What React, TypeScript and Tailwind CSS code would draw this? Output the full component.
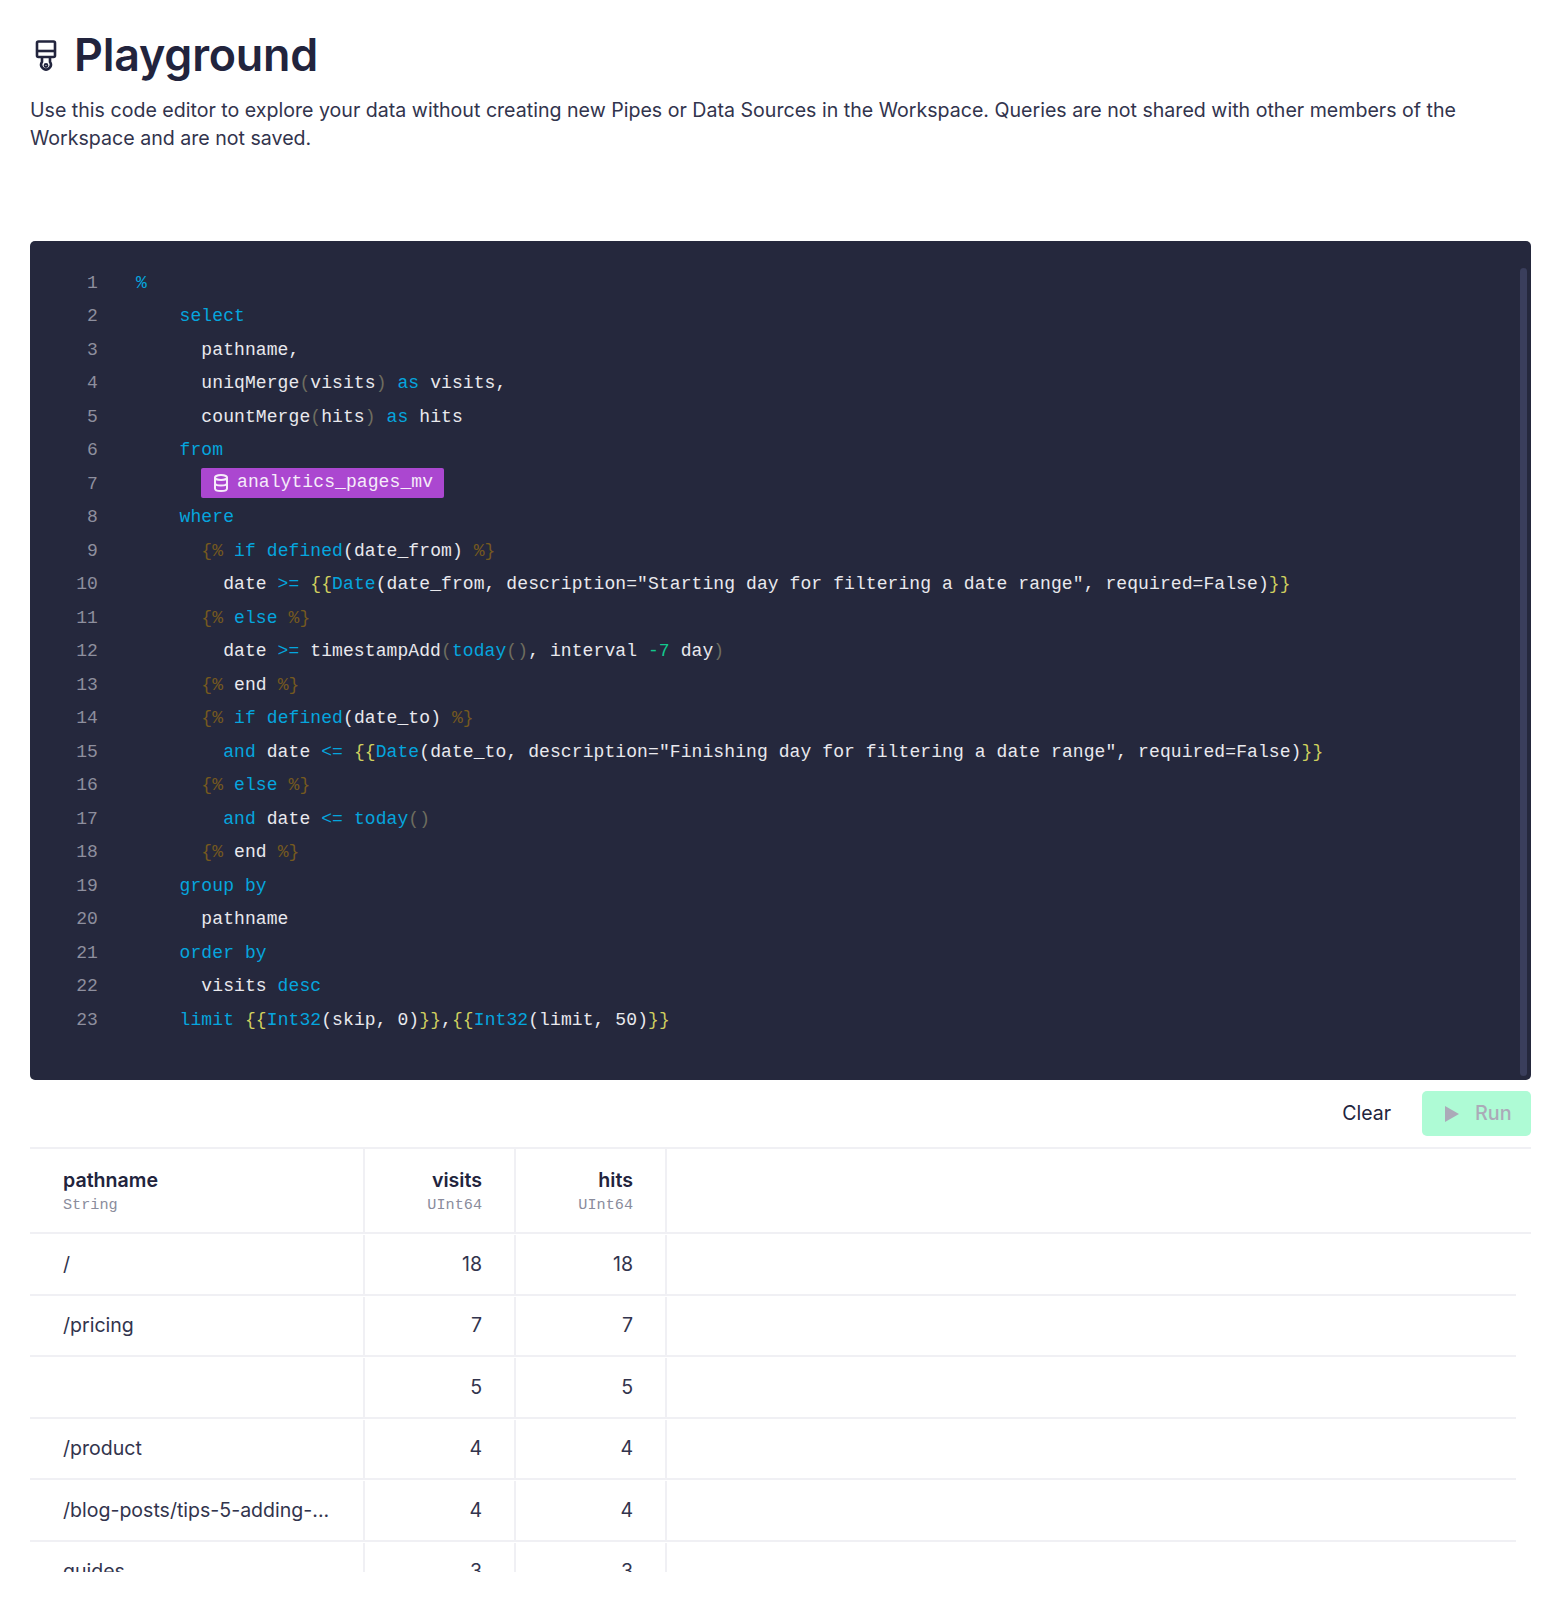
type Seg = [string, string?]

const kw = 'text-[#05a5de]'
const br = 'text-[#75591f]'
const yl = 'text-[#cfcf5e]'
const pn = 'text-[#6e6d5f]'
const gn = 'text-[#12c98d]'

const lines: Seg[][] = [
  [['%', kw]],
  [['    '], ['select', kw]],
  [['      pathname,']],
  [['      uniqMerge'], ['(', pn], ['visits'], [')', pn], [' '], ['as', kw], [' visits,']],
  [['      countMerge'], ['(', pn], ['hits'], [')', pn], [' '], ['as', kw], [' hits']],
  [['    '], ['from', kw]],
  [['TAG']],
  [['    '], ['where', kw]],
  [['      '], ['{%', br], [' '], ['if', kw], [' '], ['defined', kw], ['(date_from) '], ['%}', br]],
  [['        date '], ['>=', kw], [' '], ['{{', yl], ['Date', kw], ['(date_from, description="Starting day for filtering a date range", required=False)'], ['}}', yl]],
  [['      '], ['{%', br], [' '], ['else', kw], [' '], ['%}', br]],
  [['        date '], ['>=', kw], [' timestampAdd'], ['(', pn], ['today', kw], ['()', pn], [', interval '], ['-7', gn], [' day'], [')', pn]],
  [['      '], ['{%', br], [' end '], ['%}', br]],
  [['      '], ['{%', br], [' '], ['if', kw], [' '], ['defined', kw], ['(date_to) '], ['%}', br]],
  [['        '], ['and', kw], [' date '], ['<=', kw], [' '], ['{{', yl], ['Date', kw], ['(date_to, description="Finishing day for filtering a date range", required=False)'], ['}}', yl]],
  [['      '], ['{%', br], [' '], ['else', kw], [' '], ['%}', br]],
  [['        '], ['and', kw], [' date '], ['<=', kw], [' '], ['today', kw], ['()', pn]],
  [['      '], ['{%', br], [' end '], ['%}', br]],
  [['    '], ['group by', kw]],
  [['      pathname']],
  [['    '], ['order by', kw]],
  [['      visits '], ['desc', kw]],
  [['    '], ['limit', kw], [' '], ['{{', yl], ['Int32', kw], ['(skip, 0)'], ['}}', yl], [','], ['{{', yl], ['Int32', kw], ['(limit, 50)'], ['}}', yl]],
]

const rows = [
  ['/', '18', '18'],
  ['/pricing', '7', '7'],
  ['', '5', '5'],
  ['/product', '4', '4'],
  ['/blog-posts/tips-5-adding-...', '4', '4'],
  ['guides', '3', '3'],
]

function BrushIcon() {
  return (
    <svg width="22" height="32" viewBox="0 0 22 32" fill="none" stroke="#22243d" strokeWidth="2.6" strokeLinejoin="round">
      <rect x="2" y="2.5" width="18" height="15.5" rx="1.5" />
      <path d="M2 12h18" />
      <path d="M7 18v5a4.8 4.8 0 1 0 8 0V18" />
      <circle cx="11" cy="26.5" r="1.5" strokeWidth="1.8" />
    </svg>
  )
}

function TableIcon() {
  return (
    <svg width="16" height="18" viewBox="0 0 16 18" fill="none" stroke="currentColor" strokeWidth="2">
      <ellipse cx="8" cy="3.5" rx="6" ry="2.5" />
      <path d="M2 3.5v11c0 1.4 2.7 2.5 6 2.5s6-1.1 6-2.5v-11" />
      <path d="M2 9c0 1.4 2.7 2.5 6 2.5s6-1.1 6-2.5" />
    </svg>
  )
}

export default function App() {
  return (
    <div className="h-[1600px] overflow-hidden bg-white px-[30px] font-['Inter',sans-serif] text-[#22243d]">
      <div className="flex items-center gap-[17px] pl-[5px] pt-[27px]">
        <BrushIcon />
        <h1 className="text-[44.8px] font-semibold leading-[56px] tracking-[-0.2px]">Playground</h1>
      </div>
      <p className="mt-[13px] text-[19.6px] leading-[28px] text-[#32344d]">
        Use this code editor to explore your data without creating new Pipes or Data Sources in the Workspace. Queries are not shared with other members of the Workspace and are not saved.
      </p>

      <div className="relative mt-[89px] h-[839px] rounded-[5px] bg-[#25283d] pt-[25.5px] font-['Liberation_Mono',monospace] text-[18px] leading-[33.53px] tracking-[0.09px] text-[#e9e9ee]">
        {lines.map((segs, i) => (
          <div key={i} className="flex h-[33.53px] whitespace-pre">
            <span className="w-[68px] shrink-0 text-right text-[#8e8f9e]">{i + 1}</span>
            <span className="ml-[38px]">
              {segs[0][0] === 'TAG' ? (
                <span className="ml-[65px] inline-flex h-[30px] w-[243px] -translate-y-[1px] items-center gap-[8px] rounded-[2px] bg-[#ab47d0] pl-[12px] align-middle text-[#f6ecfa]">
                  <TableIcon />
                  analytics_pages_mv
                </span>
              ) : (
                segs.map((s, j) => (
                  <span key={j} className={s[1]}>
                    {s[0]}
                  </span>
                ))
              )}
            </span>
          </div>
        ))}
        <div className="absolute bottom-[4px] right-[4px] top-[27px] w-[7px] rounded bg-[#3a3e5c]" />
      </div>

      <div className="mt-[11px] flex h-[45px] items-center justify-end gap-[31px]">
        <span className="text-[19.5px] text-[#22243d]">Clear</span>
        <button className="flex h-[45px] w-[109px] items-center gap-[16px] rounded-[5px] bg-[#aefbd5] pl-[23px] text-[19.8px] font-medium text-[#abaab8]">
          <svg width="14" height="16" viewBox="0 0 14 16" fill="#abaab8">
            <path d="M0 0v16l14-8z" />
          </svg>
          Run
        </button>
      </div>

      <div className="mt-[11px] h-[425px] overflow-hidden">
        <div className="grid h-[87px] grid-cols-[335px_151px_151px_1fr] border-y-2 border-[#f0f0f4]">
          <div className="border-r-2 border-[#f0f0f4] pl-[33px] pt-[18px]">
            <div className="text-[19.6px] font-semibold leading-[26px]">pathname</div>
            <div className="font-['Liberation_Mono',monospace] text-[15.2px] leading-[25px] text-[#8a8c9c]">String</div>
          </div>
          <div className="border-r-2 border-[#f0f0f4] pr-[32px] pt-[18px] text-right">
            <div className="text-[19.6px] font-semibold leading-[26px]">visits</div>
            <div className="font-['Liberation_Mono',monospace] text-[15.2px] leading-[25px] text-[#8a8c9c]">UInt64</div>
          </div>
          <div className="border-r-2 border-[#f0f0f4] pr-[32px] pt-[18px] text-right">
            <div className="text-[19.6px] font-semibold leading-[26px]">hits</div>
            <div className="font-['Liberation_Mono',monospace] text-[15.2px] leading-[25px] text-[#8a8c9c]">UInt64</div>
          </div>
          <div />
        </div>
        <div className="mr-[15px]">
          {rows.map((r) => (
            <div key={r[0] + r[1]} className="grid h-[61.5px] grid-cols-[335px_151px_151px_1fr] border-b-2 border-[#f0f0f4] pt-[1px] text-[19.55px] text-[#32344d]">
              <div className="flex items-center border-r-2 border-[#f0f0f4] pl-[33px]">{r[0]}</div>
              <div className="flex items-center justify-end border-r-2 border-[#f0f0f4] pr-[32px]">{r[1]}</div>
              <div className="flex items-center justify-end border-r-2 border-[#f0f0f4] pr-[32px]">{r[2]}</div>
              <div />
            </div>
          ))}
        </div>
      </div>
    </div>
  )
}
